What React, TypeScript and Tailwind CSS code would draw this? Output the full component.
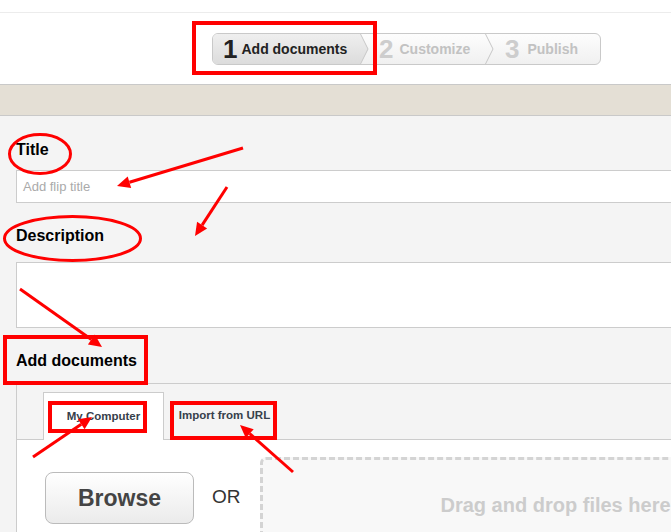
import React from 'react';

type Pt = [number, number];

// red arrow with a filled head, drawn over the page
const Arrow: React.FC<{ from: Pt; to: Pt }> = ({ from, to }) => {
  const [x1, y1] = from;
  const [x2, y2] = to;
  const a = Math.atan2(y2 - y1, x2 - x1);
  const len = 13;
  const half = 6;
  const bx = x2 - Math.cos(a) * len;
  const by = y2 - Math.sin(a) * len;
  const px = -Math.sin(a) * half;
  const py = Math.cos(a) * half;
  const head = `${x2},${y2} ${bx + px},${by + py} ${bx - px},${by - py}`;
  return (
    <g>
      <line x1={x1} y1={y1} x2={bx} y2={by} stroke="#ff0000" strokeWidth={3} />
      <polygon points={head} fill="#ff0000" />
    </g>
  );
};

const Chevron: React.FC<{ filled?: boolean }> = ({ filled }) => (
  <svg width="9" height="30" viewBox="0 0 9 30" className="shrink-0">
    <defs>
      <linearGradient id="stepGrad" x1="0" y1="0" x2="0" y2="1">
        <stop offset="0" stopColor="#efefef" />
        <stop offset="1" stopColor="#dcdcdc" />
      </linearGradient>
    </defs>
    {filled && <polygon points="0,0 8,15 0,30" fill="url(#stepGrad)" />}
    <polyline points="0.5,0 8,15 0.5,30" fill="none" stroke="#c6c6c6" strokeWidth={1} />
  </svg>
);

export default function App() {
  return (
    <div className="relative w-[671px] h-[532px] overflow-hidden bg-[#f4f4f4] font-['Liberation_Sans',Arial,sans-serif]">
      {/* Header with steps */}
      <div className="h-[13px] bg-white border-b border-[#ececec]"></div>
      <div className="h-[71px] bg-white pl-[212px] pt-[20px]">
        <div className="flex h-[32px] w-[389px] rounded-[6px] border border-[#c9c9c9] overflow-hidden bg-gradient-to-b from-[#fdfdfd] to-[#f0f0f0]">
          <div className="flex items-center w-[147px] shrink-0 pl-[10px] bg-gradient-to-b from-[#efefef] to-[#dcdcdc]">
            <span className="text-[26px] font-bold leading-none text-[#222]">1</span>
            <span className="ml-[4px] text-[14px] font-bold text-[#222]">Add documents</span>
          </div>
          <Chevron filled />
          <div className="flex items-center w-[116px] shrink-0 pl-[10px]">
            <span className="text-[26px] font-bold leading-none text-[#cdcdcd]">2</span>
            <span className="ml-[6px] text-[14px] font-bold text-[#c2c2c2]">Customize</span>
          </div>
          <Chevron />
          <div className="flex items-center pl-[11px]">
            <span className="text-[26px] font-bold leading-none text-[#cdcdcd]">3</span>
            <span className="ml-[8px] text-[14px] font-bold text-[#c2c2c2]">Publish</span>
          </div>
        </div>
      </div>
      <div className="h-[32px] border-y border-[#c9c9c9] bg-[#e4dfd5]"></div>

      {/* Form */}
      <div className="pl-[16px]">
        <div className="mt-[24px] text-[16px] leading-[20px] font-bold text-black">Title</div>
        <div className="mt-[10px] flex items-center h-[33px] w-[800px] border border-[#cccccc] bg-white pl-[6px] text-[13px] text-[#aaaaaa]">
          Add flip title
        </div>

        <div className="mt-[23px] text-[16px] leading-[20px] font-bold text-black">Description</div>
        <div className="mt-[16px] h-[66px] w-[800px] border border-[#cccccc] bg-white"></div>

        <div className="mt-[23px] text-[16px] leading-[20px] font-bold text-black">Add documents</div>
        <div className="mt-[12px] w-[800px] border-t border-l border-[#cccccc]">
          {/* Tabs */}
          <div className="flex pt-[8px] pl-[26px] border-b border-[#cccccc]">
            <div className="-mb-px flex h-[48px] w-[121px] shrink-0 items-center justify-center border-x border-t border-[#cccccc] bg-white text-[11.5px] font-bold text-[#36404b]">
              My Computer
            </div>
            <div className="flex h-[47px] w-[121px] shrink-0 items-center justify-center text-[11.5px] font-bold text-[#36404b]">
              Import from URL
            </div>
          </div>

          {/* Upload area */}
          <div className="flex items-start bg-white pl-[28px] pt-[17px] h-[200px]">
            <div className="mt-[15px] flex h-[52px] w-[149px] shrink-0 items-center justify-center rounded-[8px] border border-[#bbbbbb] bg-gradient-to-b from-white to-[#ebebeb] text-[23px] font-bold text-[#444]">
              Browse
            </div>
            <div className="ml-[18px] mt-[29px] shrink-0 text-[19px] leading-[22px] text-[#333]">OR</div>
            <div className="ml-[19px] h-[170px] w-[600px] shrink-0 rounded-[6px] border-[3px] border-dashed border-[#d4d4d4] bg-[#f8f8f8] pl-[178px] pt-[33px] text-[20px] leading-[24px] font-bold text-[#cccccc]">
              Drag and drop files here
            </div>
          </div>
        </div>
      </div>

      {/* Red annotations */}
      <svg className="pointer-events-none absolute inset-0" width="671" height="532">
        <g fill="none" stroke="#ff0000">
          <rect x="194" y="23" width="181" height="50" strokeWidth={4} />
          <rect x="5" y="337" width="141" height="46" strokeWidth={4} />
          <rect x="50" y="403" width="95" height="28" strokeWidth={4} />
          <rect x="172" y="403" width="103" height="35" strokeWidth={4} />
          <ellipse cx="40" cy="154" rx="30.5" ry="19.5" strokeWidth={3} />
          <ellipse cx="72.5" cy="238.5" rx="68" ry="22" strokeWidth={3} />
        </g>
        <Arrow from={[243, 148]} to={[117, 186]} />
        <Arrow from={[227, 187]} to={[195, 236]} />
        <Arrow from={[20, 289]} to={[102, 347]} />
        <Arrow from={[33, 457]} to={[92, 417]} />
        <Arrow from={[293, 472]} to={[240, 425]} />
      </svg>
    </div>
  );
}
